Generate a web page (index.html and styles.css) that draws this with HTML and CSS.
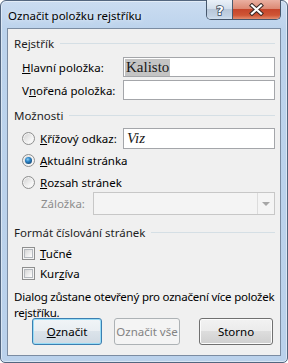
FILE: index.html
```html
<!DOCTYPE html>
<html lang="cs">
<head>
<meta charset="utf-8">
<title>Označit položku rejstříku</title>
<link rel="stylesheet" href="styles.css">
</head>
<body>
<div class="window">
  <div class="titlebar">
    <span class="title">Označit položku rejstříku</span>
    <div class="caption">
      <div class="cbtn help">
        <svg width="12" height="14" viewBox="0 0 12 14"><text x="6" y="12" text-anchor="middle" class="qmark">?</text></svg>
      </div>
      <div class="cbtn close">
        <svg width="15" height="13" viewBox="0 0 15 13"><path d="M3 2.5 L12 10.5 M12 2.5 L3 10.5" class="xo"/><path d="M3 2.5 L12 10.5 M12 2.5 L3 10.5" class="xi"/></svg>
      </div>
    </div>
  </div>
  <div class="client">
    <div class="ghead g1"><span>Rejstřík</span></div>
    <div class="frow r1">
      <span class="flabel"><u>H</u>lavní položka:</span>
      <div class="input"><span class="sel">Kalisto</span></div>
    </div>
    <div class="frow r2">
      <span class="flabel">V<u>n</u>ořená položka:</span>
      <div class="input"></div>
    </div>
    <div class="ghead g2"><span>Možnosti</span></div>
    <div class="frow r3">
      <span class="flabel opt"><i class="radio"></i><span><u>K</u>řížový odkaz:</span></span>
      <div class="input tall"><span class="ital">Viz</span></div>
    </div>
    <div class="orow r4"><i class="radio on"></i><span><u>A</u>ktuální stránka</span></div>
    <div class="orow r5"><i class="radio"></i><span><u>R</u>ozsah stránek</span></div>
    <div class="brow r6">
      <span class="blabel">Záložka:</span>
      <div class="combo"><div class="drop"><i class="arrow"></i></div></div>
    </div>
    <div class="ghead g3"><span>Formát číslování stránek</span></div>
    <div class="orow c1"><i class="check"></i><span><u>T</u>učné</span></div>
    <div class="orow c2"><i class="check"></i><span>Kur<u>z</u>íva</span></div>
    <p class="note">Dialog zůstane otevřený pro označení více položek rejstříku.</p>
    <div class="buttons">
      <div class="btn def"><span><u>O</u>značit</span></div>
      <div class="btn dis"><span>Označit vše</span></div>
      <div class="btn std"><span>Storno</span></div>
    </div>
  </div>
</div>
</body>
</html>
```

FILE: styles.css
```css
* { box-sizing: border-box; margin: 0; padding: 0; }
html, body { width: 288px; height: 363px; overflow: hidden; background: #fff; }
body {
  font-family: "Noto Sans", "Open Sans", sans-serif;
  font-size: 11.5px;
  color: #000;
}
u { text-decoration: underline; text-underline-offset: 1px; }

.window {
  width: 288px;
  height: 363px;
  border: 1px solid #53667f;
  border-radius: 6px 6px 5px 5px;
  background: linear-gradient(#cadcf1, #bcd3ec 28px, #bad1eb);
  box-shadow: inset 0 0 0 1px rgba(255,255,255,0.45);
  padding: 0 6px 6px;
  display: flex;
  flex-direction: column;
}

.titlebar {
  height: 27px;
  display: flex;
  align-items: flex-start;
  flex: none;
}
.title {
  flex: 1;
  padding: 6px 0 0 1px;
  line-height: 17px;
  font-size: 11.5px;
  color: #000;
  text-shadow: 0 0 5px rgba(255,255,255,0.9);
}
.caption {
  display: flex;
  margin-top: -1px;
  height: 20px;
  border: 1px solid #46576c;
  border-top: none;
  border-radius: 0 0 5px 5px;
  overflow: hidden;
}
.cbtn {
  height: 19px;
  display: flex;
  align-items: center;
  justify-content: center;
}
.help {
  width: 26px;
  background: linear-gradient(#eaf1f8, #d3dfec 45%, #b8c7d9 50%, #c2d2e4 85%, #d2e0ef);
  border-right: 1px solid #4a5b6f;
}
.close {
  width: 47px;
  background: linear-gradient(#eab0a1, #dc8a75 45%, #c6462b 50%, #cf5535 80%, #e38d6f);
}
.qmark {
  font-family: "DejaVu Sans", sans-serif;
  font-weight: bold;
  font-size: 13px;
  fill: #fff;
  stroke: #3a4a5e;
  stroke-width: 1.6px;
  paint-order: stroke;
}
.xo { stroke: #3d2a26; stroke-width: 4.2; stroke-linecap: square; fill: none; }
.xi { stroke: #fff; stroke-width: 2.2; stroke-linecap: square; fill: none; }

.client {
  flex: 1;
  background: #f0f0f0;
  border: 1px solid #7b8ca2;
  padding: 0 5px 0 6px;
  display: flex;
  flex-direction: column;
}

.ghead {
  height: 16px;
  display: flex;
  align-items: center;
  gap: 6px;
  color: #1e1e1e;
}
.ghead::after {
  content: "";
  flex: 1;
  height: 1px;
  background: #d5dfe5;
}
.g1 { margin-top: 6px; }
.g2 { margin-top: 7px; }
.g3 { margin-top: 9px; }

.frow {
  display: flex;
  align-items: center;
  padding-left: 8px;
}
.flabel { width: 101px; display: flex; align-items: center; }
.r1 { margin-top: 6px; height: 20px; }
.r2 { margin-top: 3px; height: 20px; }
.r3 { margin-top: 5px; height: 21px; }

.input {
  flex: 1;
  height: 100%;
  background: #fff;
  border: 1px solid #a4a6aa;
  display: flex;
  align-items: center;
  padding-left: 1px;
  font-family: "Liberation Serif", "Times New Roman", serif;
  font-size: 15px;
  color: #1a1a1a;
}
.sel {
  background: #c4c4c4;
  padding: 0 1px;
  line-height: 17px;
}
.ital { font-style: italic; padding-left: 2px; }

.orow {
  display: flex;
  align-items: center;
  padding-left: 8px;
  gap: 5px;
  height: 18px;
}
.r4 { margin-top: 2px; }
.r5 { margin-top: 5px; height: 17px; }
.c1 { margin-top: 5px; height: 17px; }
.c2 { margin-top: 3px; height: 17px; }
.opt { gap: 5px; }

.radio {
  width: 13px;
  height: 13px;
  flex: none;
  border-radius: 50%;
  border: 1px solid #8e8f8f;
  background: linear-gradient(135deg, #d0d0d0, #f6f6f6 70%, #ffffff);
  box-shadow: inset 0 0 0 1px #f4f4f4;
  position: relative;
}
.radio.on::after {
  content: "";
  position: absolute;
  left: 2px;
  top: 2px;
  width: 7px;
  height: 7px;
  border-radius: 50%;
  background: radial-gradient(circle at 40% 35%, #8fd0f6 0, #2d86c8 35%, #174f80 75%, #1a3f63 100%);
}
.check {
  width: 13px;
  height: 13px;
  flex: none;
  border: 1px solid #8e8f8f;
  background: #f4f4f4;
  padding: 1px;
  display: flex;
}
.check::after {
  content: "";
  flex: 1;
  border: 1px solid #b4b8bd;
  background: linear-gradient(135deg, #d6d6d6, #f4f4f4 75%, #ffffff);
}

.brow {
  display: flex;
  align-items: center;
  padding-left: 27px;
  height: 23px;
  margin-top: 1px;
}
.blabel { width: 52px; color: #8d8d8d; }
.combo {
  flex: 1;
  height: 23px;
  border: 1px solid #c7c7c7;
  background: #f4f4f4;
  display: flex;
  justify-content: flex-end;
}
.drop {
  width: 17px;
  border-left: 1px solid #dcdcdc;
  display: flex;
  align-items: center;
  justify-content: center;
}
.arrow {
  width: 0;
  height: 0;
  border-left: 4px solid transparent;
  border-right: 4px solid transparent;
  border-top: 4px solid #a6a6a6;
}

.note {
  margin-top: 7px;
  line-height: 16px;
  letter-spacing: -0.22px;
}

.buttons {
  display: flex;
  margin-top: -3px;
  padding-left: 18px;
}
.btn {
  height: 27px;
  border: 1px solid #707070;
  border-radius: 3px;
  background: linear-gradient(#f2f2f2, #ebebeb 50%, #dddddd 50%, #cfcfcf);
  box-shadow: inset 0 0 0 1px #fcfcfc;
  display: flex;
  align-items: center;
  justify-content: center;
}
.def {
  width: 70px;
  border-color: #3c7fb1;
  box-shadow: inset 0 0 0 1px #97dcf6;
  background: linear-gradient(#f0f4f7, #e9eef2 50%, #dbe3ea 50%, #d0dae3);
}
.dis {
  width: 66px;
  margin-left: 12px;
  border-color: #adb2b5;
  background: #f4f4f4;
  box-shadow: none;
  color: #838383;
}
.std {
  width: 74px;
  margin-left: 19px;
}
```
